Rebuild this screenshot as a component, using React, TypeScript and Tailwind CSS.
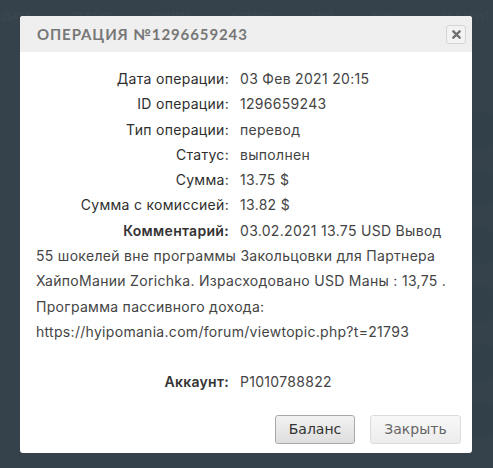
import React from "react";

const rows = [
  { label: "Дата операции:", value: "03 Фев 2021 20:15" },
  { label: "ID операции:", value: "1296659243" },
  { label: "Тип операции:", value: "перевод" },
  { label: "Статус:", value: "выполнен" },
  { label: "Сумма:", value: "13.75 $" },
  { label: "Сумма с комиссией:", value: "13.82 $" },
];

const bgHeaders = ["ДАТА", "СТАТУС", "СУММА", "КОМИС", "ТИП", "ОПЕР", "АККАУНТ"];

export default function App() {
  return (
    <div className="relative w-[493px] h-[468px] overflow-hidden bg-[#36424b] font-['Inter',sans-serif]">
      {/* page behind the modal */}
      <div className="flex justify-between px-[2px] pt-[9px] text-[10px] font-bold tracking-wide text-[#3a4750]">
        {bgHeaders.map((h) => (
          <span key={h}>{h}</span>
        ))}
      </div>
      <div className="absolute right-[-6px] top-[112px] flex flex-col gap-[22px]">
        {[0, 1, 2, 3, 4, 5].map((i) => (
          <div key={i} className="w-[36px] h-[36px] rounded-full bg-[#324049]" />
        ))}
      </div>

      {/* modal */}
      <div className="absolute left-[20px] top-[16px] w-[452px] h-[437px] bg-white rounded-[3px] overflow-hidden flex flex-col">
        <div className="h-[36px] bg-[#efefef] flex items-center justify-between pl-[17px] pr-[6px]">
          <span className="text-[15px] font-bold tracking-[0.9px] text-[#777] font-['Lato',sans-serif]">
            ОПЕРАЦИЯ №1296659243
          </span>
          <button className="w-[20px] h-[19px] mt-[1px] flex items-center justify-center rounded-[3px] border border-[#d4d4d4] bg-[#f3f3f3]">
            <svg width="9" height="9" viewBox="0 0 10 10">
              <path d="M1.5 1.5 L8.5 8.5 M8.5 1.5 L1.5 8.5" stroke="#6f6f6f" strokeWidth="2.6" strokeLinecap="round" />
            </svg>
          </button>
        </div>

        <div className="flex-1 pl-[16px] pr-[14px] pt-[14px] text-[14px] leading-[25px] tracking-[0.3px] text-[#444]">
          {rows.map((r) => (
            <div key={r.label} className="flex h-[25.3px]">
              <span className="w-[193px] shrink-0 text-right text-[#2e2e2e]">{r.label}</span>
              <span className="ml-[11px]">{r.value}</span>
            </div>
          ))}
          <p className="leading-[25.3px]">
            <span className="inline-block align-top w-[193px] text-right text-[#333] font-semibold">Комментарий:</span>
            <span className="ml-[11px]">
              03.02.2021 13.75 USD Вывод 55 шокелей вне программы Закольцовки для Партнера ХайпоМании Zorichka. Израсходовано USD Маны : 13,75 . Программа пассивного дохода: https://hyipomania.com/forum/viewtopic.php?t=21793
            </span>
          </p>
          <div className="flex mt-[25px]">
            <span className="w-[193px] shrink-0 text-right text-[#333] font-semibold">Аккаунт:</span>
            <span className="ml-[11px]">P1010788822</span>
          </div>

          <div className="flex justify-end gap-[15px] mt-[21px] -mr-[3px] tracking-normal font-['DejaVu_Sans',sans-serif] text-[14px]">
            <button className="w-[80px] h-[29px] rounded-[3px] border border-[#a9a9a9] bg-gradient-to-b from-[#f2f2f2] to-[#dedede] text-[#333]">
              Баланс
            </button>
            <button className="w-[91px] h-[29px] rounded-[3px] border border-[#dcdcdc] bg-gradient-to-b from-[#f8f8f8] to-[#ececec] text-[#666]">
              Закрыть
            </button>
          </div>
        </div>
      </div>
    </div>
  );
}
